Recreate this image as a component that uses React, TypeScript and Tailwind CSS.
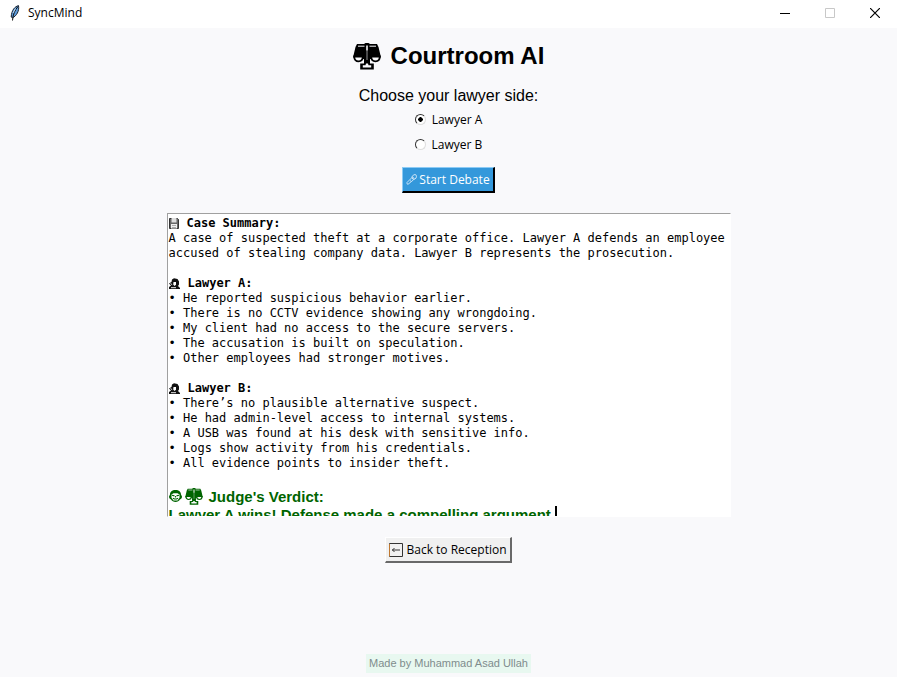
import { useState } from "react";

function Scales({ className }: { className: string }) {
  return (
    <svg viewBox="0 0 28 27" className={className} fill="none" stroke="currentColor" aria-hidden="true">
      <path d="M4 1h7l1.500-1h3L17 1h7l1.500 3L28 14.500 19 16h-2v4h-6v-4H9l-9-1.500L2.500 4z" fill="currentColor" stroke="none" />
      <path d="M5 3.200h6.500M16.500 3.200H23" stroke="#f9f9fb" strokeWidth="1" />
      <path d="M14 2.500v5" stroke="#f9f9fb" strokeWidth="1.600" />
      <path d="M14 7.500v12" stroke="#f9f9fb" strokeWidth=".6" />
      <path d="M1.200 13.500h8.600c0 3-1.800 4.800-4.300 4.800s-4.300-1.800-4.300-4.800zM18.200 13.500h8.600c0 3-1.800 4.800-4.300 4.800s-4.300-1.800-4.300-4.800z" fill="#f9f9fb" strokeWidth="1.800" />
      <path d="M11 17h6v3.500h3.800v6H7.200v-6H11z" fill="currentColor" stroke="none" />
      <path d="M13 20.500h2l.5 1.700h2.700V24.500H9.800v-2.300h2.700z" fill="#f9f9fb" stroke="none" />
    </svg>
  );
}

function Feather() {
  return (
    <svg viewBox="0 0 10 16" className="h-4 w-2.5" aria-hidden="true">
      <path d="M8.500.6C5 1.500 1.500 5 1.200 12l1.300.8C6.500 11 9.500 6 8.500.6z" fill="#5b9bdc" stroke="#1c2530" strokeWidth="1" />
      <path d="M8 1.500C5 5 3 9 2.500 15.500" stroke="#111" strokeWidth="1" fill="none" />
      <path d="M5.500 3.500L3 8" stroke="#c3dcf5" strokeWidth="1" />
    </svg>
  );
}

function Floppy() {
  return (
    <svg viewBox="0 0 10 11" className="h-[11px] w-2.5" aria-hidden="true">
      <path d="M.5.5h8l1 1v9h-9z" fill="#666" stroke="#333" />
      <path d="M2.500 0h5v4.500h-5z" fill="#ddd" />
      <path d="M2 6h6v4.500H2z" fill="#eee" />
      <path d="M3 7.500h4M3 9.500h4" stroke="#999" strokeWidth=".8" />
    </svg>
  );
}

function Detective() {
  return (
    <svg viewBox="0 0 11 11" className="h-[11px] w-[11px]" aria-hidden="true">
      <path d="M3 1.500L5 .2l3.500.8L10 3.500v3L9 8l2 2v1H0V9l2-1.500L0 5.500 2.500 4z" fill="#111" />
      <path d="M4.500 4H7v2.700L5.500 8 4.200 6.500z" fill="#fff" />
      <path d="M1.500 5.500l1.700 1.200M2 9.700h5" stroke="#fff" strokeWidth=".9" />
    </svg>
  );
}

function JudgeFace() {
  return (
    <svg viewBox="0 0 13 12" className="h-3 w-[13px]" aria-hidden="true">
      <path d="M6.500 0C10 0 12 2 12 4.500L13 6.500c0 2-1 2.500-2 3C10 11 8.500 12 6.500 12S3 11 2 9.500c-1-.5-2-1-2-3l1-2C1 2 3 0 6.500 0z" fill="#006400" />
      <path d="M2.500 4.500L4.500 3.300h4l2 1.200v3.200L8.500 10.500h-4l-2-2.800z" fill="#fff" />
      <path d="M3 5.200l2.500.7M10 5.200l-2.500.7M4 8.200l1.500.8h2L9 8.200M6.500 6v1.500" stroke="#006400" strokeWidth="1.100" fill="none" />
    </svg>
  );
}

function Microphone() {
  return (
    <svg viewBox="0 0 11 11" className="h-[11px] w-[11px]" fill="none" stroke="#c8e2f6" aria-hidden="true">
      <path d="M6 3.500L1 8.500v1.300L2 10.300l5.500-4.500z" />
      <path d="M6 2.500L8 .7h1.800l.7 1.500-.5 2L8 5.500 6 4z" />
      <path d="M6.300 2.500l2 2.300M4 6.500l1 .8" />
    </svg>
  );
}

function BackArrow() {
  return (
    <svg viewBox="0 0 14 14" className="h-3.5 w-3.5" fill="none" aria-hidden="true">
      <path d="M.5.500h13v13H.500z" stroke="#333" />
      <path d="M.5 1v12.500" stroke="#c07830" />
      <path d="M3 7h8M5.500 5L3.500 7l2 2" stroke="#333" />
    </svg>
  );
}

const ARGUMENTS = [
  {
    name: "Lawyer A:",
    points: [
      "He reported suspicious behavior earlier.",
      "There is no CCTV evidence showing any wrongdoing.",
      "My client had no access to the secure servers.",
      "The accusation is built on speculation.",
      "Other employees had stronger motives.",
    ],
  },
  {
    name: "Lawyer B:",
    points: [
      "There’s no plausible alternative suspect.",
      "He had admin-level access to internal systems.",
      "A USB was found at his desk with sensitive info.",
      "Logs show activity from his credentials.",
      "All evidence points to insider theft.",
    ],
  },
];

function SideOption({ side, selected, onSelect }: { side: string; selected: boolean; onSelect: () => void }) {
  return (
    <label className="flex h-[25px] items-center gap-1.5">
      <input
        type="radio"
        name="side"
        checked={selected}
        onChange={onSelect}
        className="h-[11px] w-[11px] appearance-none rounded-full border border-t-[#333] border-r-[#ddd] border-b-[#ddd] border-l-[#333] bg-white checked:bg-[radial-gradient(circle,#000_0_2px,#fff_2.5px)]"
      />
      {side}
    </label>
  );
}

export default function App() {
  const [side, setSide] = useState("Lawyer A");
  return (
    <div className="flex min-h-screen flex-col bg-[#f9f9fb] font-['Open_Sans','Noto_Sans',sans-serif] text-xs text-black">
      <header className="flex h-7 items-center bg-white pb-[3px] pl-2.5">
        <Feather />
        <span className="ml-2">SyncMind</span>
        <div className="ml-auto flex">
          <button aria-label="Minimize" className="flex h-6 w-[45px] items-center justify-center">
            <svg viewBox="0 0 10 10" className="h-2.5 w-2.5"><path d="M0 5.500h10" stroke="#000" /></svg>
          </button>
          <button aria-label="Maximize" disabled className="flex h-6 w-[45px] items-center justify-center">
            <svg viewBox="0 0 10 10" className="h-2.5 w-2.5"><path d="M.5.500h9v9h-9z" stroke="#c8c8c8" fill="none" /></svg>
          </button>
          <button aria-label="Close" className="flex h-6 w-[45px] items-center justify-center">
            <svg viewBox="0 0 10 10" className="h-2.5 w-2.5"><path d="M0 0l10 10M10 0L0 10" stroke="#000" strokeWidth="1.200" /></svg>
          </button>
        </div>
      </header>

      <main className="flex flex-1 flex-col items-center pt-2.5">
        <h1 className="flex h-9 items-center gap-2.5 font-['Liberation_Sans',Arial,sans-serif] text-2xl font-bold">
          <Scales className="h-[27px] w-7" />
          Courtroom AI
        </h1>
        <fieldset className="mt-3 flex flex-col items-center">
          <legend className="mx-auto h-[21px] font-['Liberation_Sans',Arial,sans-serif] text-base leading-[19px]">
            Choose your lawyer side:
          </legend>
          <SideOption side="Lawyer A" selected={side === "Lawyer A"} onSelect={() => setSide("Lawyer A")} />
          <SideOption side="Lawyer B" selected={side === "Lawyer B"} onSelect={() => setSide("Lawyer B")} />
        </fieldset>
        <button className="mt-2.5 flex h-[26px] items-center gap-0.5 border-t border-r-2 border-b-2 border-l border-t-[#8ccbf5] border-r-black border-b-black border-l-[#8ccbf5] bg-[#3498db] px-[3px] text-white">
          <Microphone />
          Start Debate
        </button>

        <section
          aria-label="Debate transcript"
          className="mt-5 h-[304px] w-full max-w-[564px] overflow-hidden border border-t-[#a0a0a0] border-r-white border-b-white border-l-[#a0a0a0] bg-white px-px pt-0.5 font-['DejaVu_Sans_Mono',monospace] text-xs leading-[15px]"
        >
          <h2 className="flex items-center gap-2 font-bold">
            <Floppy />
            Case Summary:
          </h2>
          <p>
            A case of suspected theft at a corporate office. Lawyer A defends an employee
            <br />
            accused of stealing company data. Lawyer B represents the prosecution.
          </p>
          {ARGUMENTS.map((argument) => (
            <div key={argument.name} className="mt-[15px]">
              <h2 className="flex items-center gap-2 font-bold">
                <Detective />
                {argument.name}
              </h2>
              {argument.points.map((point) => (
                <p key={point}>• {point}</p>
              ))}
            </div>
          ))}
          <div className="mt-[15px] font-['Liberation_Sans',Arial,sans-serif] text-[15px] font-bold text-[#006400]">
            <h2 className="flex h-5 items-center">
              <JudgeFace />
              <Scales className="mr-1.5 ml-[3px] h-[17px] w-[18px]" />
              Judge's Verdict:
            </h2>
            <p className="flex leading-[18px]">
              Lawyer A wins! Defense made a compelling argument.
              <span className="h-[18px] w-0.5 bg-black" />
            </p>
          </div>
        </section>

        <button className="mt-5 flex h-[26px] items-center gap-[3px] border-t border-r-2 border-b-2 border-l border-t-white border-r-[#696969] border-b-[#696969] border-l-white bg-[#f0f0f0] px-[3px]">
          <BackArrow />
          Back to Reception
        </button>
        <footer className="mt-auto mb-1 bg-[#e8f8f0] px-[3px] font-['Liberation_Sans',Arial,sans-serif] text-[11px] leading-[19px] text-[#7f8c8d]">
          Made by Muhammad Asad Ullah
        </footer>
      </main>
    </div>
  );
}
